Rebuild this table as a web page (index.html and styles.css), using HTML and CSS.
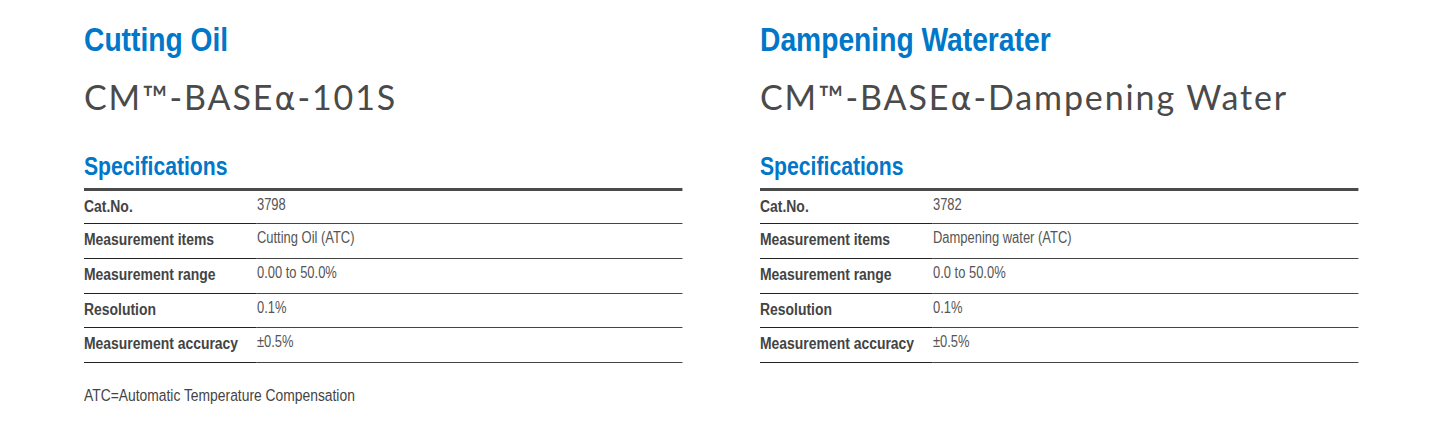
FILE: index.html
```html
<!DOCTYPE html>
<html lang="en">
<head>
<meta charset="utf-8">
<title>Specifications</title>
<link rel="stylesheet" href="styles.css">
</head>
<body>
<main class="page">
  <section class="product">
    <h2 class="category cond">Cutting Oil</h2>
    <h1 class="model">CM™-BASE<span class="alpha">α</span>-101S</h1>
    <h3 class="spec-title cond">Specifications</h3>
    <table class="spec cond">
      <tr><th>Cat.No.</th><td>3798</td></tr>
      <tr><th>Measurement items</th><td>Cutting Oil (ATC)</td></tr>
      <tr><th>Measurement range</th><td>0.00 to 50.0%</td></tr>
      <tr><th>Resolution</th><td>0.1%</td></tr>
      <tr><th>Measurement accuracy</th><td>±0.5%</td></tr>
    </table>
    <p class="note cond">ATC=Automatic Temperature Compensation</p>
  </section>
  <section class="product">
    <h2 class="category cond">Dampening Waterater</h2>
    <h1 class="model">CM™-BASE<span class="alpha">α</span>-Dampening Water</h1>
    <h3 class="spec-title cond">Specifications</h3>
    <table class="spec cond">
      <tr><th>Cat.No.</th><td>3782</td></tr>
      <tr><th>Measurement items</th><td>Dampening water (ATC)</td></tr>
      <tr><th>Measurement range</th><td>0.0 to 50.0%</td></tr>
      <tr><th>Resolution</th><td>0.1%</td></tr>
      <tr><th>Measurement accuracy</th><td>±0.5%</td></tr>
    </table>
  </section>
</main>
</body>
</html>
```
FILE: styles.css
```css
html, body {
  margin: 0;
  padding: 0;
  background: #ffffff;
  overflow: hidden;
}

.page {
  display: grid;
  grid-template-columns: 598px 598px;
  column-gap: 78px;
  align-items: start;
  padding: 19px 0 0 84px;
  font-family: "Liberation Sans", Arial, sans-serif;
  color: #444444;
}

.product {
  min-width: 0;
}

/* Condensed sans look (Helvetica Condensed style) */
.cond {
  transform: scaleX(0.83);
  transform-origin: left top;
}

.category {
  margin: 0;
  font-size: 34px;
  line-height: 40px;
  font-weight: bold;
  color: #0077c8;
  white-space: nowrap;
}

.model {
  margin: 18px 0 0 0;
  height: 40px;
  font-family: Lato, "Open Sans", sans-serif;
  font-size: 34px;
  line-height: 40px;
  font-weight: normal;
  letter-spacing: 1.9px;
  color: #4a4a4a;
  white-space: nowrap;
}

.alpha {
  font-family: "DejaVu Sans", sans-serif;
  font-size: 32px;
  line-height: 1;
}

.spec-title {
  margin: 34px 0 0 0;
  font-size: 25.5px;
  line-height: 30px;
  font-weight: bold;
  color: #0077c8;
  white-space: nowrap;
}

.spec {
  width: 720.5px;
  margin-top: 7px;
  border-collapse: separate;
  border-spacing: 0;
  border-top: 3px solid #4a4a4a;
}

.spec th,
.spec td {
  padding: 0;
  line-height: 20px;
  text-align: left;
  vertical-align: top;
  white-space: nowrap;
}

.spec th {
  width: 208.4px;
  padding: 6px 0 8px 0;
  font-size: 16.8px;
  font-weight: bold;
  color: #444444;
  border-bottom: 1px solid #222222;
}

.spec td {
  padding: 3.5px 0 10.5px 0;
  font-size: 15.6px;
  font-weight: normal;
  color: #555555;
  border-bottom: 1px solid #444444;
}

.spec tr:first-child th {
  padding-bottom: 6px;
}

.spec tr:first-child td {
  padding-bottom: 8.5px;
}

.spec tr:nth-child(4) th {
  padding-bottom: 7px;
}

.spec tr:nth-child(4) td {
  padding-bottom: 9.5px;
}

.note {
  margin: 23px 0 0 0;
  font-size: 16.7px;
  line-height: 20px;
  color: #444444;
  white-space: nowrap;
}
```
